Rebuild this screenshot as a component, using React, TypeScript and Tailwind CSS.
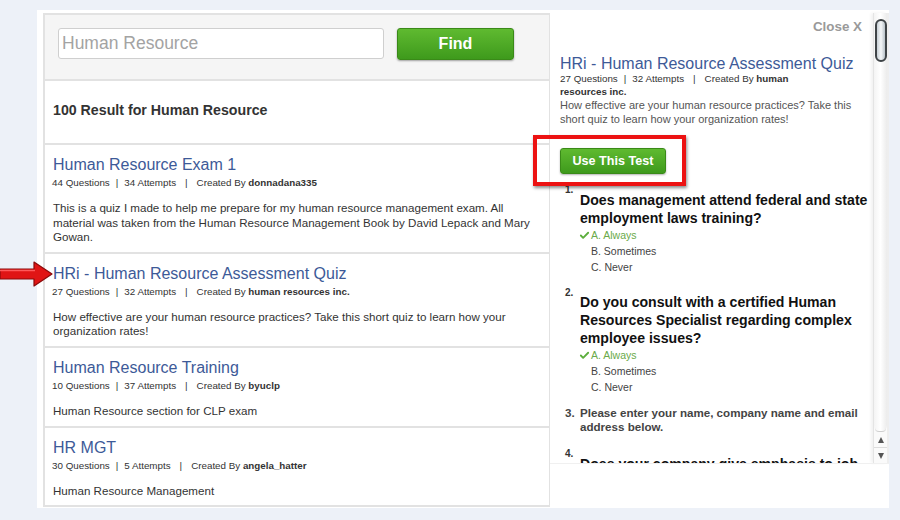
import { Check } from 'lucide-react';

const results = [
  {
    title: 'Human Resource Exam 1',
    questions: 44,
    attempts: 34,
    author: 'donnadana335',
    desc: 'This is a quiz I made to help me prepare for my human resource management exam. All material was taken from the Human Resource Management Book by David Lepack and Mary Gowan.',
  },
  {
    title: 'HRi - Human Resource Assessment Quiz',
    questions: 27,
    attempts: 32,
    author: 'human resources inc.',
    desc: 'How effective are your human resource practices? Take this short quiz to learn how your organization rates!',
  },
  {
    title: 'Human Resource Training',
    questions: 10,
    attempts: 37,
    author: 'byuclp',
    desc: 'Human Resource section for CLP exam',
  },
  {
    title: 'HR MGT',
    questions: 30,
    attempts: 5,
    author: 'angela_hatter',
    desc: 'Human Resource Management',
  },
];

function Meta({ q, a, by }: { q: number; a: number; by: string }) {
  return (
    <span>
      {q} Questions<span className="mx-[6px]">|</span>
      {a} Attempts<span className="mx-[9px]">|</span>
      Created By <b>{by}</b>
    </span>
  );
}

function Answers() {
  return (
    <div className="text-[10.5px] leading-[16px] text-[#444]">
      <div className="flex items-center text-[#6aaa4a]">
        <Check className="h-[11px] w-[11px] -ml-[1px] mr-[1px]" strokeWidth={4} color="#5cae3c" />
        A. Always
      </div>
      <div className="pl-[11px]">B. Sometimes</div>
      <div className="pl-[11px]">C. Never</div>
    </div>
  );
}

export default function App() {
  return (
    <div className="relative h-[520px] w-[900px] overflow-hidden bg-[#edf1f8] pl-[37px] pt-[10px] font-['Liberation_Sans',Arial,sans-serif] text-[#333]">
      <div className="flex h-[498px] w-[852px] bg-white pl-[6px] pt-[3px]">
        {/* left: search + results */}
        <div className="flex h-[494px] w-[507px] flex-col border-2 border-r border-[#e2e2e2]">
          <div className="flex h-[64px] items-start bg-[#f5f5f5] pl-[13px] pt-[13px]">
            <input
              defaultValue="Human Resource"
              className="h-[31px] w-[326px] rounded-[3px] border border-[#cfcfcf] bg-white px-[3px] text-[17.5px] text-[#a3a3a3] outline-none"
            />
            <button className="ml-[13px] h-[32px] w-[117px] rounded-[3px] border border-[#3a8a18] bg-gradient-to-b from-[#5fba30] to-[#3e9a1c] text-[16px] font-bold text-white shadow-[0_1px_2px_rgba(0,0,0,0.35)]">
              Find
            </button>
          </div>
          <div className="h-[66px] border-y-2 border-[#e2e2e2] pl-[8px] pt-[20px] text-[14.2px] font-bold leading-[18px] text-[#333]">
            100 Result for Human Resource
          </div>
          {results.map((r, i) => (
            <div key={r.title} className={`pl-[8px] pr-[12px] pt-[10px] ${i < results.length - 1 ? 'border-b-2 border-[#e2e2e2] pb-[7px]' : ''}`}>
              <div className="text-[16px] leading-[20px] text-[#3d5a98]">{r.title}</div>
              <div className="-ml-[1px] text-[9.8px] leading-[16px] text-[#333]">
                <Meta q={r.questions} a={r.attempts} by={r.author} />
              </div>
              <p className="mt-[10px] text-[11.6px] leading-[14.6px] text-[#333]">{r.desc}</p>
            </div>
          ))}
        </div>

        {/* right: preview */}
        <div className="flex flex-1 flex-col">
          <div className="flex h-[450px]">
            <div className="w-[323px] pl-[10px] [clip-path:inset(0_0_0_-40px)]">
              <div className="pr-[11px] pt-[6px] text-right text-[13.4px] font-bold leading-[16px] text-[#9a9a9a]">Close X</div>
              <div className="mt-[19px] text-[16px] leading-[19px] text-[#3d5a98]">HRi - Human Resource Assessment Quiz</div>
              <div className="w-[235px] text-[9.8px] leading-[12.5px] text-[#333]">
                <Meta q={27} a={32} by="human resources inc." />
              </div>
              <p className="text-[11px] leading-[14px] text-[#555]">
                How effective are your human resource practices? Take this short quiz to learn how your organization rates!
              </p>
              <div className="relative mt-[22px] w-[106px]">
                <button className="h-[26px] w-[106px] rounded-[3px] border border-[#3a8a18] bg-gradient-to-b from-[#5fba30] to-[#3e9a1c] text-[12.6px] font-bold text-white shadow-[0_1px_2px_rgba(0,0,0,0.3)]">
                  Use This Test
                </button>
                <div className="absolute -bottom-[12px] -left-[27px] -right-[20px] -top-[13px] border-[4px] border-[#ec1212] shadow-[1px_2px_3px_rgba(0,0,0,0.45)]" />
              </div>

              <div className="mt-[17px] flex pl-[5px]">
                <span className="w-[15px] -mt-[7px] text-[10px] font-bold leading-[12px] text-[#333]">1.</span>
                <div className="flex-1">
                  <div className="text-[14.1px] font-bold leading-[18px] text-[#111]">Does management attend federal and state employment laws training?</div>
                  <Answers />
                </div>
              </div>

              <div className="mt-[18px] flex pl-[5px]">
                <span className="w-[15px] -mt-[6px] text-[10px] font-bold leading-[12px] text-[#333]">2.</span>
                <div className="flex-1">
                  <div className="text-[14.1px] font-bold leading-[18px] text-[#111]">Do you consult with a certified Human Resources Specialist regarding complex employee issues?</div>
                  <Answers />
                </div>
              </div>

              <div className="mt-[11px] flex pl-[5px] text-[11.6px] font-bold leading-[14px] text-[#444]">
                <span className="w-[15px]">3.</span>
                <div className="flex-1">Please enter your name, company name and email address below.</div>
              </div>

              <div className="mt-[21px] flex pl-[5px]">
                <span className="w-[15px] -mt-[7px] text-[10px] font-bold leading-[12px] text-[#333]">4.</span>
                <div className="flex-1 text-[14.1px] font-bold leading-[18px] text-[#111]">Does your company give emphasis to job descriptions?</div>
              </div>
            </div>

            {/* scrollbar */}
            <div className="flex w-[14px] flex-col border-l border-[#e4e4e4] bg-[#fafafa] shadow-[-2px_0_3px_rgba(0,0,0,0.06)]">
              <div className="flex flex-1 flex-col rounded-b-full bg-gradient-to-r from-[#f4f4f4] via-white to-[#ececec] px-[1px] pt-[6px]">
                <div className="h-[43px] w-[12px] rounded-full border-2 border-[#3f4447] bg-gradient-to-r from-[#c8d0d6] via-[#f5f7f8] to-[#b9c2c8]" />
                <div className="flex-1" />
                <div className="h-[4px] rounded-b-full border-b border-[#cfcfcf]" />
              </div>
              <div className="flex h-[16px] items-center justify-center border-b border-[#dcdcdc]">
                <div className="h-0 w-0 border-x-[3.5px] border-b-[6px] border-x-transparent border-b-[#555]" />
              </div>
              <div className="flex h-[15px] items-center justify-center">
                <div className="h-0 w-0 border-x-[3.5px] border-t-[6px] border-x-transparent border-t-[#555]" />
              </div>
            </div>
            <div className="w-[2px] bg-[#eeeeee]" />
          </div>
          <div className="flex-1 border-t border-[#f0f0f0]" />
        </div>
      </div>

      {/* red arrow annotation */}
      <svg className="absolute left-0 top-[260px]" width="54" height="28" viewBox="0 0 54 28">
        <path d="M0 9 L34 9 L34 2 L52 14 L34 26 L34 19 L0 19 Z" fill="#e01515" stroke="#8a0a0a" strokeWidth="1.2" strokeLinejoin="round" />
        <path d="M0 10.5 L35 10.5" stroke="#ff5a5a" strokeWidth="1.5" />
      </svg>
    </div>
  );
}
